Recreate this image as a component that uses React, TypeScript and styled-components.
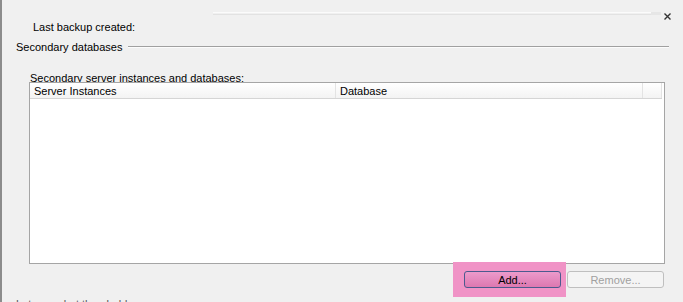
import styled, { createGlobalStyle } from "styled-components";

const GlobalStyle = createGlobalStyle`
    html, body {
        margin: 0;
        padding: 0;
        background: #f0f0f0;
        overflow: hidden;
    }
    body {
        font-family: "Liberation Sans", Arial, sans-serif;
        font-size: 11px;
        color: #000;
    }
`;

const Frame = styled.div`
    width: 683px;
    height: 302px;
    box-sizing: border-box;
    border-left: 2px solid #8c8c8c;
    overflow: hidden;
    display: flex;
    flex-direction: column;
    & > * {
        flex-shrink: 0;
    }
`;

const TopRow = styled.div`
    height: 20px;
    display: flex;
    align-items: flex-start;
    padding-top: 12px;
    box-sizing: border-box;
`;

const ScrolledEdge = styled.div`
    margin-left: 211px;
    width: 438px;
    height: 1px;
    border-top: 1px solid #fbfbfb;
    border-bottom: 1px solid #e2e2e2;
`;

const EdgeCap = styled.div`
    width: 10px;
    height: 3px;
    background: #e6e6e6;
`;

const Close = styled.svg`
    margin-left: 3px;
    margin-top: 1px;
`;

const FieldLabel = styled.div<{ $left: number }>`
    padding-left: ${(p) => p.$left}px;
    line-height: 14px;
    height: 14px;
    white-space: nowrap;
`;

const SectionHeader = styled.div`
    margin-top: 6px;
    padding-left: 14px;
    width: 667px;
    box-sizing: border-box;
    display: flex;
    align-items: center;
    line-height: 14px;
    gap: 6px;
`;

const Rule = styled.div`
    flex: 1;
    height: 0;
    border-top: 1px solid #a0a0a0;
    border-bottom: 1px solid #fcfcfc;
`;

const ListLabel = styled(FieldLabel)`
    margin-top: 17px;
    height: 11px;
`;

const ListView = styled.div`
    margin-left: 27px;
    width: 636px;
    height: 182px;
    box-sizing: border-box;
    border: 1px solid #a5a5a5;
    background: #fff;
`;

const HeaderRow = styled.div`
    display: flex;
    height: 15px;
    width: 632px;
    border-bottom: 1px solid #d5d5d5;
    background: linear-gradient(#ffffff, #f3f3f3);
`;

const HeaderCell = styled.div<{ $width: number }>`
    width: ${(p) => p.$width}px;
    flex: none;
    box-sizing: border-box;
    padding-left: 4px;
    line-height: 16px;
    border-right: 1px solid #e3e3e3;
    white-space: nowrap;
`;

const ButtonRow = styled.div`
    display: flex;
    justify-content: flex-end;
    width: 662px;
    margin-top: -2px;
`;

const Highlight = styled.div`
    background: #f093c6;
    padding: 9px 5px 9px 11px;
`;

const Button = styled.button<{ $disabled?: boolean }>`
    width: 97px;
    height: 17px;
    box-sizing: border-box;
    padding: 0;
    font-family: "Liberation Sans", Arial, sans-serif;
    font-size: 11px;
    line-height: 14px;
    border-radius: 3px;
    border: 1px solid ${(p) => (p.$disabled ? "#bfbfbf" : "#4b5a8e")};
    background: ${(p) => (p.$disabled ? "#f4f4f4" : "linear-gradient(#ec9acb, #dd78b0)")};
    color: ${(p) => (p.$disabled ? "#a0a0a0" : "#000")};
`;

const RemoveSlot = styled.div`
    padding-top: 9px;
    margin-left: 1px;
`;

const ClippedLine = styled.div`
    margin-top: 0;
    padding-left: 14px;
    line-height: 14px;
    color: #555;
    white-space: nowrap;
`;

export default function App() {
    return (
        <>
            <GlobalStyle />
            <Frame>
                <TopRow>
                    <ScrolledEdge />
                    <EdgeCap />
                    <Close width="7" height="7" viewBox="0 0 7 7">
                        <path d="M0.5 0.5 L6.5 6.5 M6.5 0.5 L0.5 6.5" stroke="#333" strokeWidth="1.4" />
                    </Close>
                </TopRow>
                <FieldLabel $left={31}>Last backup created:</FieldLabel>
                <SectionHeader>
                    <span>Secondary databases</span>
                    <Rule />
                </SectionHeader>
                <ListLabel $left={28}>Secondary server instances and databases:</ListLabel>
                <ListView>
                    <HeaderRow>
                        <HeaderCell $width={306}>Server Instances</HeaderCell>
                        <HeaderCell $width={307}>Database</HeaderCell>
                        <HeaderCell $width={19} />
                    </HeaderRow>
                </ListView>
                <ButtonRow>
                    <Highlight>
                        <Button>Add...</Button>
                    </Highlight>
                    <RemoveSlot>
                        <Button $disabled>Remove...</Button>
                    </RemoveSlot>
                </ButtonRow>
                <ClippedLine>Latency alert threshold:</ClippedLine>
            </Frame>
        </>
    );
}
